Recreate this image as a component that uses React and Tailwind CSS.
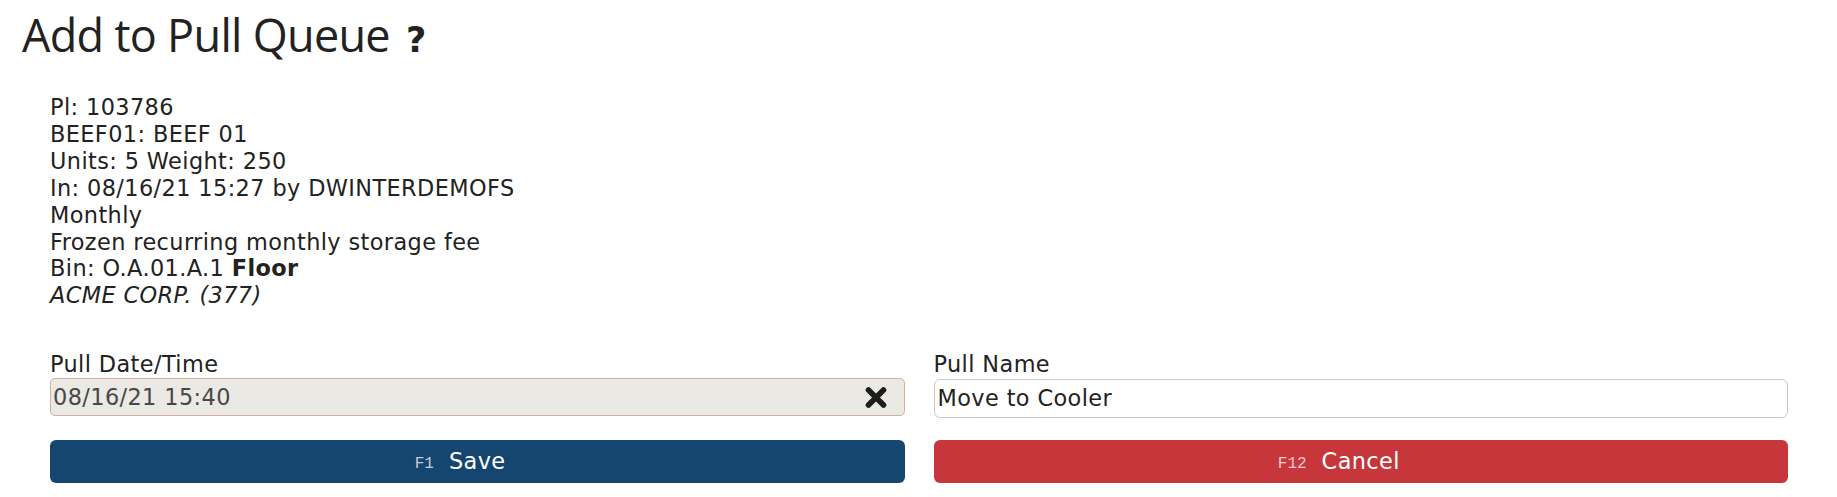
import React from "react";

function XIcon() {
  return (
    <svg width="24" height="23" viewBox="0 0 24 23" className="shrink-0">
      <path d="M4.5 4 L19.5 19 M19.5 4 L4.5 19" stroke="#1d1d1d" strokeWidth="5.6" strokeLinecap="round" />
    </svg>
  );
}

function KeyButton({ fkey, label, bg, keyColor }) {
  return (
    <button className={`h-[43px] rounded-[6px] ${bg} flex items-center justify-center text-white`}>
      <span className="relative text-[22.4px] leading-none tracking-[0.4px]">
        <span className={`absolute right-full bottom-[1px] mr-[15px] text-[16px] leading-none tracking-normal font-['Liberation_Mono',monospace] ${keyColor}`}>
          {fkey}
        </span>
        {label}
      </span>
    </button>
  );
}

export default function App() {
  return (
    <div className="w-[1837px] h-[497px] bg-white text-[#222] font-['DejaVu_Sans',Verdana,sans-serif] overflow-hidden">
      <h1 className="pl-[22px] pt-[8px] h-[62px] flex items-baseline text-[45px] leading-[54px] font-normal tracking-[-0.7px] font-['Open_Sans',sans-serif] text-[#222]">
        <span>Add to Pull Queue</span>
        <span className="ml-[16px] text-[35px] tracking-normal font-bold font-['DejaVu_Sans',sans-serif] text-[#222]">?</span>
      </h1>
      <div className="pl-[50px] pr-[49px] pt-[32px] tracking-[0.4px]">
        <div className="text-[22.4px] leading-[26.9px]">
          <div>Pl: 103786</div>
          <div>BEEF01: BEEF 01</div>
          <div>Units: 5 Weight: 250</div>
          <div>In: 08/16/21 15:27 by DWINTERDEMOFS</div>
          <div>Monthly</div>
          <div>Frozen recurring monthly storage fee</div>
          <div>
            Bin: O.A.01.A.1 <b className="font-bold">Floor</b>
          </div>
          <div className="italic">ACME CORP. (377)</div>
        </div>

        <div className="grid grid-cols-2 gap-x-[29px] mt-[42px] text-[22.4px] leading-[26.9px]">
          <div>
            <div>Pull Date/Time</div>
            <div className="h-[38px] flex items-center justify-between rounded-[5px] border border-[#d8ad9e] bg-[#ebe9e4] pl-[2px] pr-[16px]">
              <span className="text-[#484848]">08/16/21 15:40</span>
              <XIcon />
            </div>
          </div>
          <div>
            <div>Pull Name</div>
            <div className="h-[39px] mt-[1px] flex items-center rounded-[6px] border border-[#c9c9c9] bg-white pl-[3px]">
              <span className="text-[#222]">Move to Cooler</span>
            </div>
          </div>
        </div>

        <div className="grid grid-cols-2 gap-x-[29px] mt-[22px]">
          <KeyButton fkey="F1" label="Save" bg="bg-[#15466f]" keyColor="text-[#c3cdd9]" />
          <KeyButton fkey="F12" label="Cancel" bg="bg-[#c6363b]" keyColor="text-[#f0cccd]" />
        </div>
      </div>
    </div>
  );
}
